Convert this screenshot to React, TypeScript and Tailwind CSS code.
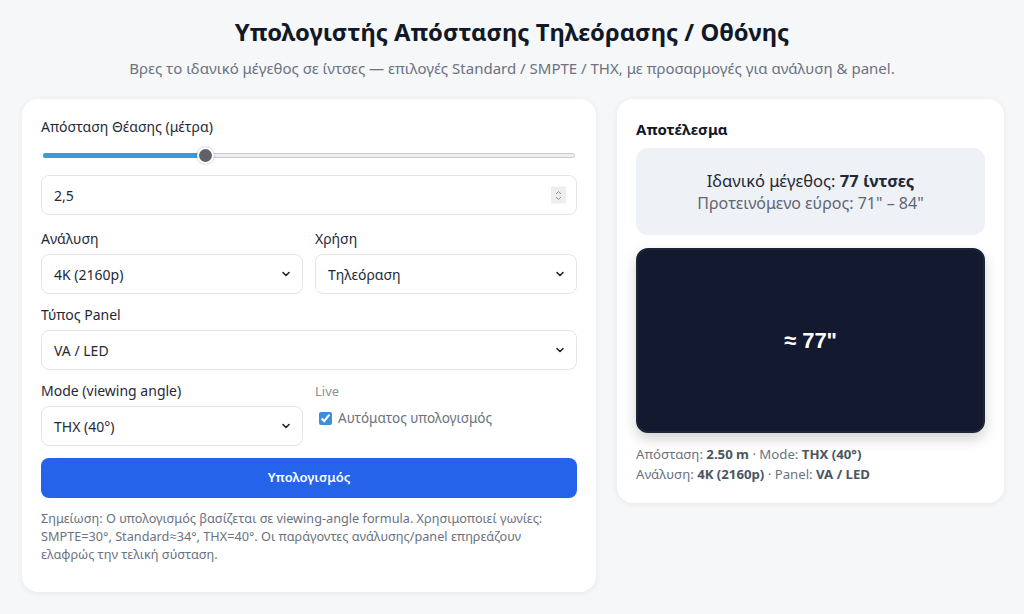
import React from 'react';

const font = { fontFamily: '"Noto Sans", "Open Sans", sans-serif' };

const Chevron = () => (
  <svg width="10" height="10" viewBox="0 0 10 10" className="absolute right-3 top-1/2 -translate-y-1/2 pointer-events-none">
    <path d="M2 3.5 L5 6.5 L8 3.5" fill="none" stroke="#222" strokeWidth="1.6" strokeLinecap="round" strokeLinejoin="round" />
  </svg>
);

interface SelectProps {
  value: string;
  options: string[];
}

const Select: React.FC<SelectProps> = ({ value, options }) => (
  <div className="relative">
    <select
      defaultValue={value}
      className="appearance-none w-full h-10 rounded-lg border border-[#e3e5e8] bg-white pl-3 pr-8 text-[14px] text-[#1f2937] outline-none"
      style={font}
    >
      {options.map((o) => (
        <option key={o}>{o}</option>
      ))}
    </select>
    <Chevron />
  </div>
);

const Label: React.FC<{ children: React.ReactNode }> = ({ children }) => (
  <div className="text-[14px] text-[#1f2937] mb-[6px] leading-[18px]">{children}</div>
);

const App: React.FC = () => {
  const pct = 30.4;

  return (
    <div className="min-h-[614px] bg-[#f6f7f9] text-[#111827]" style={font}>
      <header className="pt-[15px] text-center">
        <h1 className="text-[23.8px] font-bold leading-[34px] text-[#111827]">
          Υπολογιστής Απόστασης Τηλεόρασης / Οθόνης
        </h1>
        <p className="mt-[9px] text-[15px] text-[#6b7280] leading-[20px]">
          Βρες το ιδανικό μέγεθος σε ίντσες — επιλογές Standard / SMPTE / THX, με προσαρμογές για ανάλυση &amp; panel.
        </p>
      </header>

      <main className="mt-[21px] ml-[22px] grid grid-cols-[574px_387px] gap-[21px] items-start">
        {/* Controls */}
        <section className="bg-white rounded-2xl shadow-[0_1px_6px_rgba(0,0,0,0.07)] px-[19px] pt-[19px] pb-[29px]">
          <Label>Απόσταση Θέασης (μέτρα)</Label>
          <div className="relative h-[16px] mt-[11px] mx-[2px] flex items-center">
            <div className="w-full h-[5px] rounded-full bg-[#eceef0] border border-[#c9cbcf]" />
            <div className="absolute left-0 h-[5px] rounded-full bg-[#3b9ad9]" style={{ width: `${pct}%` }} />
            <div
              className="absolute w-[17px] h-[17px] -ml-[8px] rounded-full bg-[#5f626b] border-2 border-white shadow-[0_0_2px_rgba(0,0,0,0.35)]"
              style={{ left: `${pct}%` }}
            />
          </div>
          <div className="relative mt-[12px]">
            <input
              type="text"
              defaultValue="2,5"
              className="w-full h-10 rounded-lg border border-[#e3e5e8] bg-white pl-3 pr-10 text-[14px] text-[#1f2937] outline-none"
              style={font}
            />
            <div className="absolute right-[11px] top-1/2 -translate-y-1/2 w-[15px] h-[17px] bg-[#eceef0] flex flex-col items-center justify-center gap-[2px]">
              <svg width="7" height="4" viewBox="0 0 7 4"><path d="M1 3.5 L3.5 1 L6 3.5" fill="none" stroke="#8b8e94" strokeWidth="1" /></svg>
              <svg width="7" height="4" viewBox="0 0 7 4"><path d="M1 0.5 L3.5 3 L6 0.5" fill="none" stroke="#8b8e94" strokeWidth="1" /></svg>
            </div>
          </div>

          <div className="grid grid-cols-2 gap-x-3 mt-[15px]">
            <div>
              <Label>Ανάλυση</Label>
              <Select value="4K (2160p)" options={['1080p', '4K (2160p)', '8K (4320p)']} />
            </div>
            <div>
              <Label>Χρήση</Label>
              <Select value="Τηλεόραση" options={['Τηλεόραση', 'Οθόνη Υπολογιστή', 'Προβολέας']} />
            </div>
          </div>

          <div className="mt-[12px]">
            <Label>Τύπος Panel</Label>
            <Select value="VA / LED" options={['VA / LED', 'IPS', 'OLED']} />
          </div>

          <div className="grid grid-cols-2 gap-x-3 mt-[12px]">
            <div>
              <Label>Mode (viewing angle)</Label>
              <Select value="THX (40°)" options={['Standard (34°)', 'SMPTE (30°)', 'THX (40°)']} />
            </div>
            <div>
              <div className="text-[13px] text-[#8b8f96] leading-[18px]">Live</div>
              <label className="mt-[8px] ml-[4px] flex items-center gap-[6px] text-[13.5px] text-[#6b7280]">
                <input type="checkbox" defaultChecked className="w-[13px] h-[13px] accent-[#3b8fd9]" />
                Αυτόματος υπολογισμός
              </label>
            </div>
          </div>

          <button
            className="mt-[12px] w-full h-10 rounded-lg bg-[#2563eb] text-white text-[13px] font-semibold"
            style={font}
          >
            Υπολογισμός
          </button>

          <p className="mt-[11px] text-[12.7px] leading-[18px] text-[#6b7280]">
            Σημείωση: Ο υπολογισμός βασίζεται σε viewing-angle formula. Χρησιμοποιεί γωνίες: SMPTE=30°, Standard≈34°, THX=40°. Οι παράγοντες ανάλυσης/panel επηρεάζουν ελαφρώς την τελική σύσταση.
          </p>
        </section>

        {/* Result */}
        <section className="bg-white rounded-2xl shadow-[0_1px_6px_rgba(0,0,0,0.07)] px-[19px] pt-[20px] pb-[19px]">
          <h2 className="text-[15px] font-bold leading-[20px] text-[#111827]">Αποτέλεσμα</h2>
          <div className="mt-[9px] h-[87px] rounded-xl bg-[#eef1f5] flex flex-col items-center justify-center">
            <div className="text-[16.5px] text-[#1f2937] leading-[23px]">
              Ιδανικό μέγεθος: <b className="font-bold">77 ίντσες</b>
            </div>
            <div className="text-[16px] text-[#5f6672] leading-[23px]">Προτεινόμενο εύρος: 71" – 84"</div>
          </div>
          <div className="mt-[13px] h-[185px] rounded-xl bg-[#131a2f] border-2 border-[#1c2438] shadow-[0_6px_14px_rgba(0,0,0,0.18)] flex items-center justify-center">
            <span className="text-white text-[22px] font-bold" style={{ fontFamily: '"Liberation Sans", Arial, sans-serif' }}>
              ≈ 77"
            </span>
          </div>
          <div className="mt-[11px] text-[13.2px] leading-[20px] text-[#6b7280]">
            <div>
              Απόσταση: <b className="font-bold text-[#4b5563]">2.50 m</b> · Mode: <b className="font-bold text-[#4b5563]">THX (40°)</b>
            </div>
            <div>
              Ανάλυση: <b className="font-bold text-[#4b5563]">4K (2160p)</b> · Panel: <b className="font-bold text-[#4b5563]">VA / LED</b>
            </div>
          </div>
        </section>
      </main>
    </div>
  );
};

export default App;
